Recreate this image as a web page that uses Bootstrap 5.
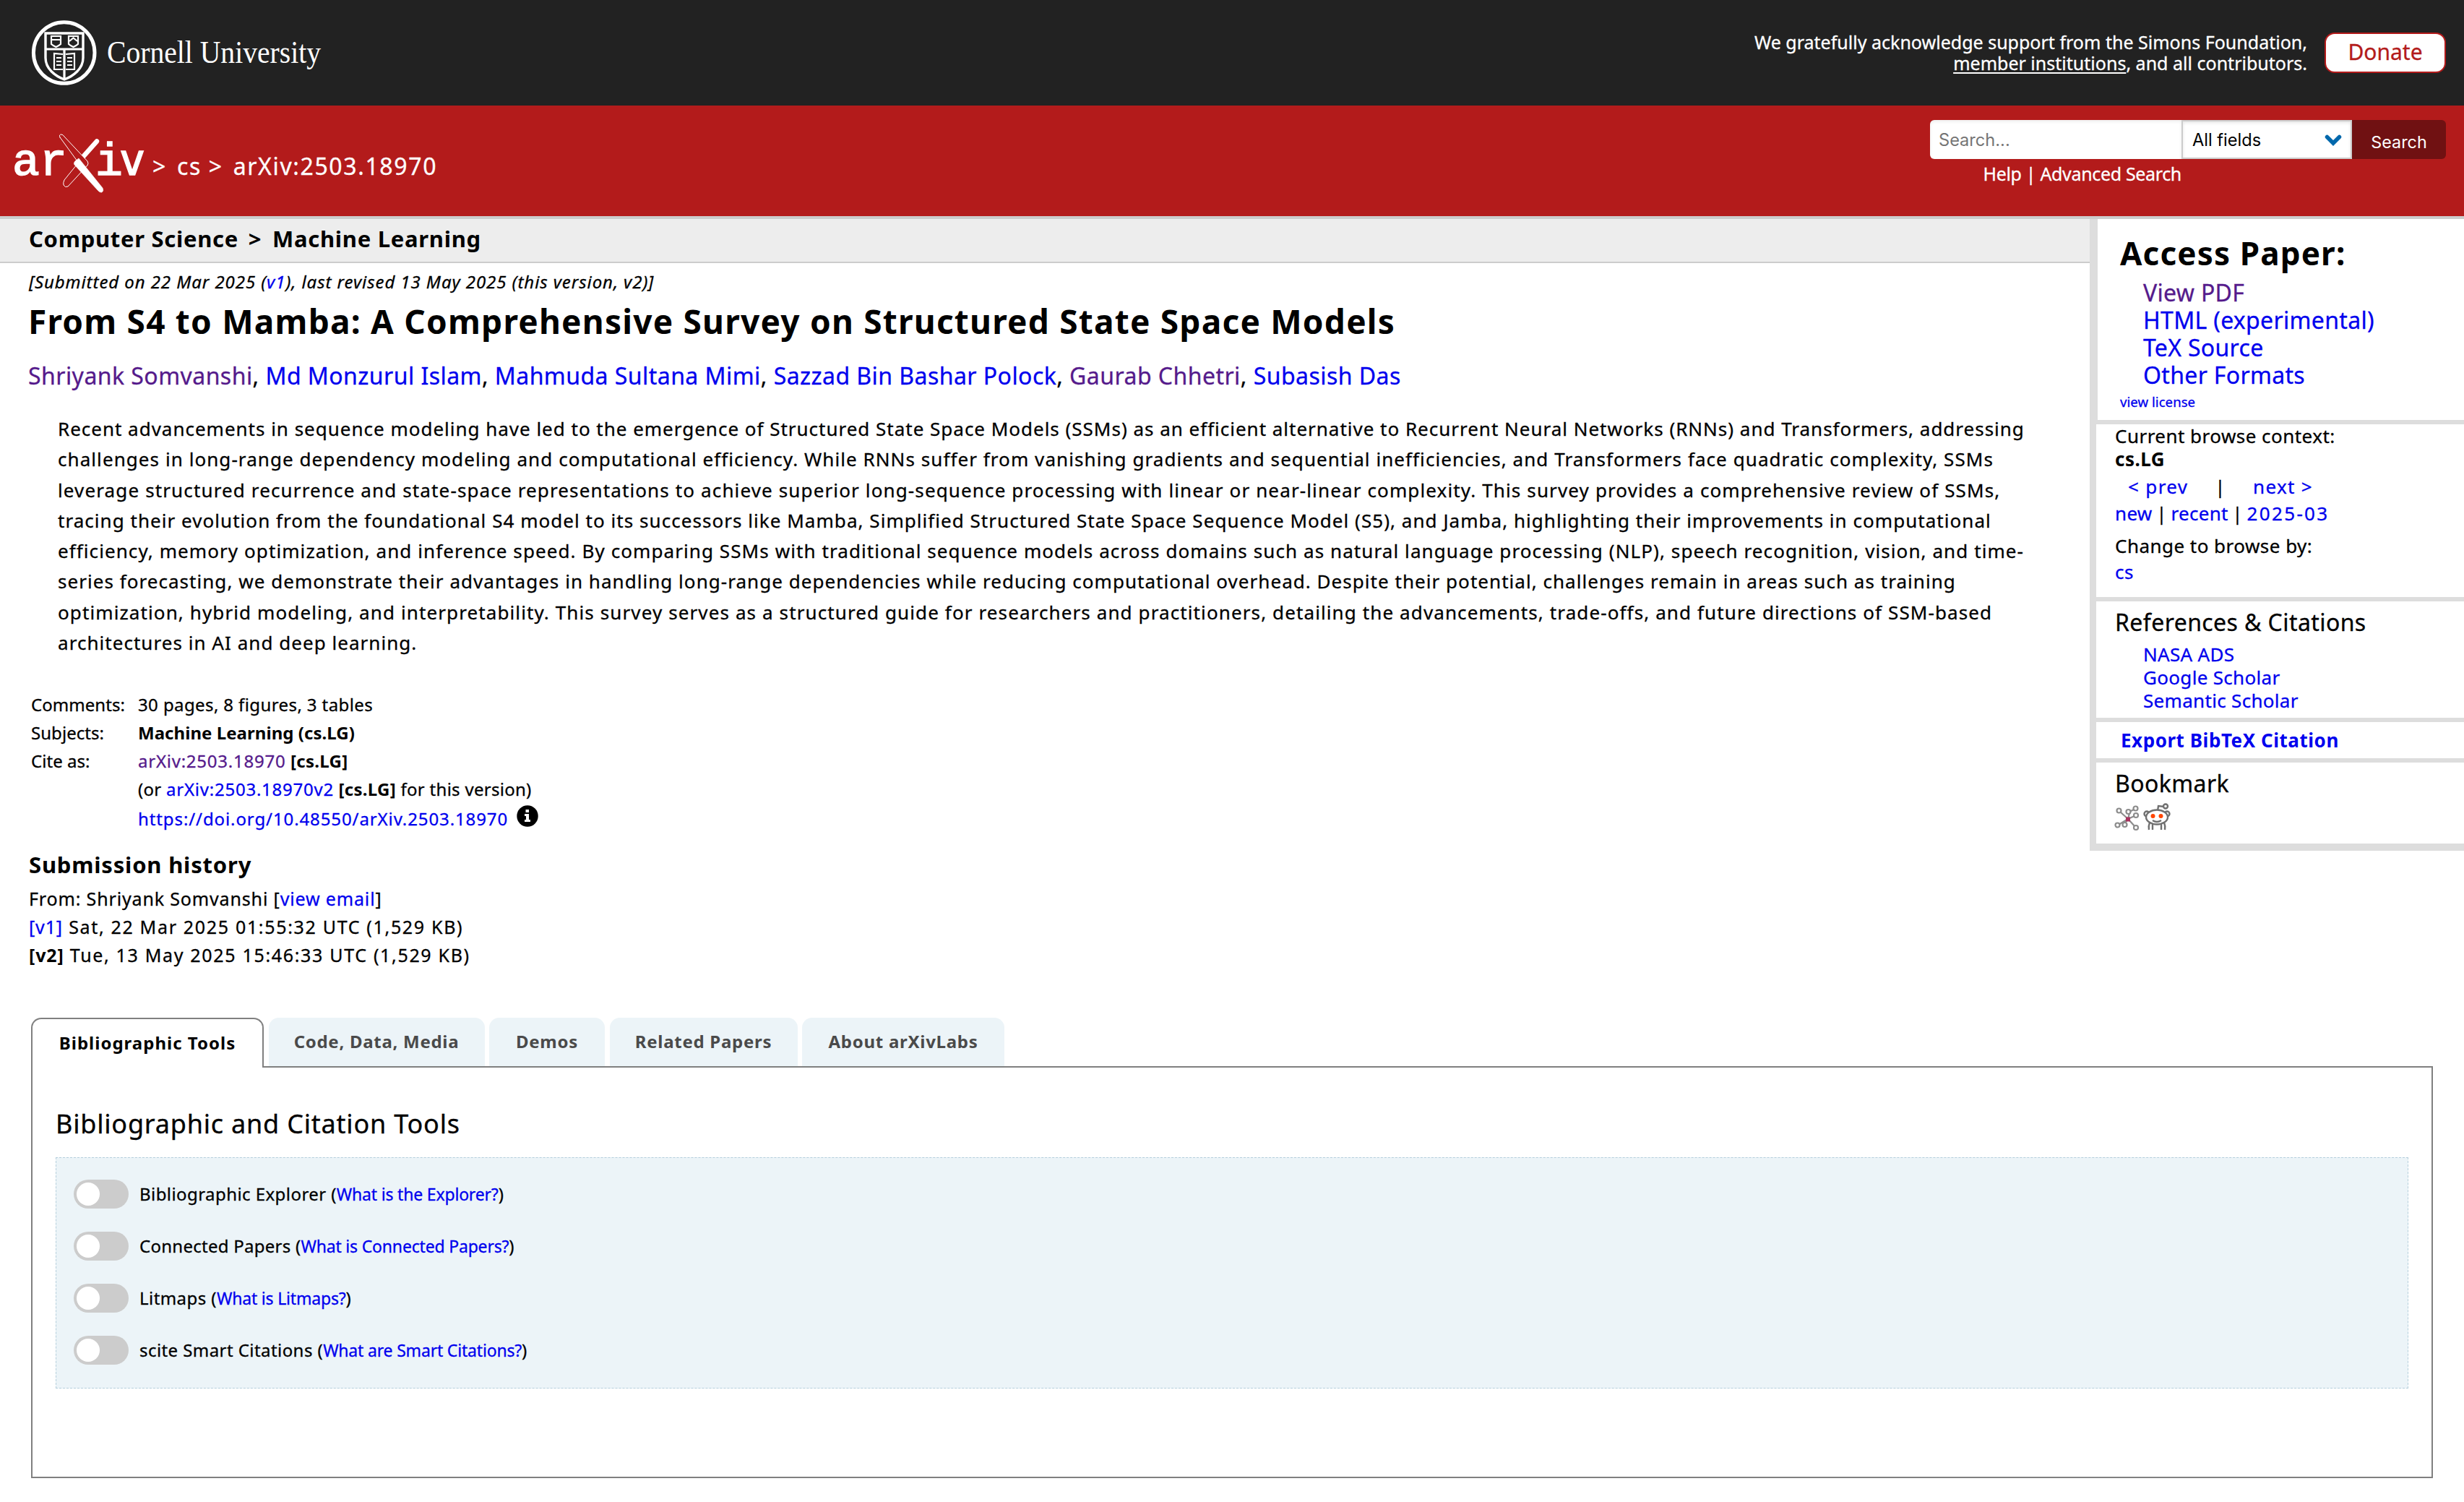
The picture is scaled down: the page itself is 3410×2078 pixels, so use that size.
<!DOCTYPE html>
<html lang="en">
<head>
<meta charset="utf-8">
<title>From S4 to Mamba: A Comprehensive Survey on Structured State Space Models</title>
<link href="https://cdn.jsdelivr.net/npm/bootstrap@5.3.0/dist/css/bootstrap.min.css" rel="stylesheet">
<style>
body{font-family:"Noto Sans","Open Sans",sans-serif;font-weight:400;font-size:26px;color:#000;background:#fff;line-height:32px;width:3410px;height:2078px;overflow:hidden;-webkit-text-stroke:.3px currentColor}
a{color:#00e;text-decoration:none;-webkit-text-stroke-color:currentColor}
a.seen{color:#551a8b}
b,.heavy,h1,h2,.tabx{font-weight:700;-webkit-text-stroke-width:0}
svg{overflow:visible;-webkit-text-stroke-width:0}
.topbar{background:#222;height:146px;padding:0 25px 0 43px}
.ack{font-size:25px;line-height:29.5px;color:#fff;letter-spacing:.0005em}
.ack a{color:#fff;text-decoration:underline;text-decoration-thickness:2px;text-underline-offset:3px}
.donate{width:168px;height:56px;border:2px solid #b31b1b;border-radius:14px;background:#fff;color:#b31b1b;font-size:30px;line-height:49px;padding:0;font-weight:400}
.redbar{background:#b31b1b;height:157px;border-bottom:4px solid #ccc;color:#fff;padding:0 25px 0 18px}
.redbar a{color:#fff}
.trail{font-size:32px;line-height:40px;letter-spacing:.051em;padding-top:64px;margin-left:9px}
.trail span{margin-right:4px}
.finder{padding-top:20px}
.finder .form-control{flex:0 0 348px;height:54px;border:0;border-radius:6px 0 0 6px;font:400 23.6px/54px Inter,"Liberation Sans",sans-serif;padding:1px 12px 0;box-shadow:inset 0 2px 4px rgba(0,0,0,.08);color:#000;-webkit-text-stroke-width:0}
.finder .form-control::placeholder{color:#757575;opacity:1}
.fieldsel{width:236px;height:54px;border:2px solid #ccc;background:#fff;color:#000;font:400 23.6px/50px Inter,"Liberation Sans",sans-serif;padding:1px 12px 0 13px;box-shadow:inset 0 2px 4px rgba(0,0,0,.1);-webkit-text-stroke-width:0}
.gobtn{width:130px;height:54px;background:#701112;color:#fff;border:0;border-radius:0 6px 6px 0;font:400 23.3px/56px Inter,"Liberation Sans",sans-serif;padding:3px 0 0;-webkit-text-stroke-width:0}
.helpline{font-size:25px;line-height:41px;letter-spacing:-.0135em;width:348px}
.crumbs{height:61px;background:#ededed;border-bottom:2px solid #ccc;padding-left:40px;font-size:31px;line-height:54px;letter-spacing:.023em;margin:0}
.crumbs span{margin:0 6px 0 5px}
.dateline{font-size:24px;line-height:52px;font-style:italic;letter-spacing:.0385em;padding-left:40px}
.papertitle{font-size:46px;line-height:56px;letter-spacing:.0266em;padding-left:39px;margin:0}
.authors{font-size:32px;line-height:95px;letter-spacing:.0141em;padding-left:39px}
.abstract{font-size:26px;line-height:42.27px;margin:5px 0 0 80px;white-space:nowrap}
.abstract span{display:block}
.w1{letter-spacing:.038em}.w2{letter-spacing:.0411em}.w3{letter-spacing:.0436em}.w4{letter-spacing:.0401em}
.w5{letter-spacing:.0418em}.w6{letter-spacing:.04em}.w7{letter-spacing:.0427em}.w8{letter-spacing:.04em}
.metatable{margin:45px 0 0 43px;font-size:24px;line-height:39px;letter-spacing:.002em}
.metatable td{padding:0}
.metatable td:first-child{width:148px}
.pagestext{letter-spacing:.0165em}
.idtext{letter-spacing:.012em}
.idtext a{letter-spacing:.032em}
.doi{line-height:43px;letter-spacing:.0375em}
.doi svg{margin:3px 0 0 12px}
.history h2{font-size:31px;line-height:50px;letter-spacing:.026em;margin:17px 0 3px}
.history{padding-left:40px;font-size:25px;line-height:39px}
.fromline{letter-spacing:.034em}
.stamp{letter-spacing:.067em}
.stamp a,.stamp b{letter-spacing:.035em}
.side{width:518px;flex:none;line-height:32px}
.side section{border-left:9px solid #ddd;border-bottom:6px solid #ddd;padding-left:26px}
.side .access{height:284px;border-left-width:11px;padding-left:31px;padding-top:17px}
.access h2{font-size:44px;line-height:60px;letter-spacing:.026em;margin:0 0 6px}
.access ul{list-style:none;margin:0;padding:0 0 0 32px;font-size:32px;line-height:38px;letter-spacing:.01em}
.license{font-size:18.6px;line-height:35px;letter-spacing:.002em}
.browse{height:245px;letter-spacing:.018em}
.side h3{font-size:32px;line-height:57px;font-weight:400;margin:0;letter-spacing:.013em}
.refs{height:167px}
.refs ul{list-style:none;margin:0;padding:0 0 0 39px;letter-spacing:.012em}
.export{height:56px;line-height:50px}
.export a{font-weight:700;letter-spacing:.021em;margin-left:8px;-webkit-text-stroke-width:0}
.side .marks{height:122px;border-bottom-width:10px}
.marks svg+svg{margin-left:8px}
.prevnext{line-height:44px;margin-left:18px;letter-spacing:.052em}
.prevnext span{margin:0 37px}
.periods{line-height:30px;letter-spacing:.012em;word-spacing:-1.5px}
.periods a+a+a{letter-spacing:.09em}
.changeby{line-height:30px;margin-top:15px}
.csline{line-height:43px}
.labs{margin:67px 0 0 43px;width:3324px}
.labs .nav{gap:6.5px;height:67px;flex-wrap:nowrap}
.tabx{flex:none;background:#ecf4f8;border-radius:14px 14px 0 0;height:67px;line-height:65px;font-size:24px;color:#4a4a4a;text-align:center;letter-spacing:.03em;padding:0}
.tabx.active{background:#fff;border:2px solid #808080;border-bottom:0;height:69px;color:#000;letter-spacing:.042em;z-index:1}
.t1{width:322px}.t2{width:299px}.t3{width:160px}.t4{width:260px}.t5{width:280px}
.panel{border:2px solid #808080;height:570px;padding:48px 32px 0}
.panel h2{font-size:36px;line-height:60px;font-weight:400;letter-spacing:.022em;margin:0 0 16px;-webkit-text-stroke-width:.3px}
.toolbox{height:320px;background:#ecf4f8;border:1px dashed #b5cfdc;padding:30px 24px;gap:32px;font-size:24px;line-height:40px;letter-spacing:.018em}
.toolbox .snug{letter-spacing:.011em}
.toolbox a{font-size:23px;letter-spacing:-.008em}
.switchx{width:76px;height:40px;border-radius:20px;background:#ccc;padding:4px;margin-right:15px}
.switchx i{display:block;width:32px;height:32px;border-radius:50%;background:#fff}
</style>
<script src="https://cdn.jsdelivr.net/npm/bootstrap@5.3.0/dist/js/bootstrap.bundle.min.js"></script>
</head>
<body>
<header>
  <div class="topbar d-flex align-items-center justify-content-between">
    <svg width="410" height="146" viewBox="43 0 410 146" aria-label="Cornell University">
      <g fill="none" stroke="#fff">
        <circle cx="88.7" cy="73" r="42.3" stroke-width="5"/>
        <path d="M63 46H115V80C115 95 102 105 89 110C76 105 63 95 63 80Z" stroke-width="3.4"/>
        <path d="M63 68H115M89 68V109" stroke-width="3.2"/>
        <path d="M71 50H84V61Q82 63 77.500 65Q73 63 71 61ZM71 55H84M95 50H108V61Q106 63 101.500 65Q97 63 95 61ZM96 57L101.500 52.500L107 57" stroke-width="2.200"/>
        <path d="M87 75L75 74V96L87 96M91 75L103 74V96L91 96M78 80H85M78 85H85M78 90H85M93 80H100M93 85H100M93 90H100" stroke-width="2.200"/>
      </g>
      <text x="148" y="87" textLength="296" lengthAdjust="spacingAndGlyphs" font-family="Liberation Serif, serif" font-weight="400" font-size="44" fill="#fff">Cornell University</text>
    </svg>
    <div class="d-flex align-items-center">
      <div class="ack text-end">We gratefully acknowledge support from the Simons Foundation,<br><a href="#">member institutions</a>, and all contributors.</div>
      <a class="btn donate ms-4" href="#">Donate</a>
    </div>
  </div>
  <div class="redbar d-flex justify-content-between">
    <div class="d-flex">
      <svg width="184" height="150" viewBox="18 146 184 150" aria-label="arXiv">
        <g fill="#fff" stroke="#fff" stroke-width="1.600" font-family="Liberation Mono, monospace" font-weight="400" font-size="63">
          <text x="17" y="242">a</text><text x="55" y="242">r</text><text x="132" y="242">i</text>
          <text x="165" y="242" font-family="DejaVu Sans Mono, monospace" font-size="60">v</text>
        </g>
        <g fill="none" stroke="#fff" stroke-linecap="round">
          <path d="M115 217L89 249Q87 253 88 256Q90 260 94 258L118 232" stroke-width="1"/>
          <path d="M134 195.500L114 218" stroke-width="6.400"/>
          <path d="M83 190Q81 186 85 186Q87 186 89 189L121 223Q123 226 121 229L115 234L83 190Z" fill="#b31b1b" stroke-width="1"/>
          <path d="M105 222L109 219L142 260Q144 264 141 266Q138 267 135 263L103 228Q101 225 105 222Z" fill="#fff" stroke-width=".5"/>
        </g>
      </svg>
      <div class="trail"><span>&gt;</span> <a href="#">cs</a> <span>&gt;</span> arXiv:2503.18970</div>
    </div>
    <div class="finder">
      <div class="d-flex">
        <input class="form-control" type="text" placeholder="Search...">
        <div class="fieldsel d-flex align-items-center justify-content-between">All fields
          <svg width="24" height="16" viewBox="0 0 24 16"><path d="M3.500 3.500L12 12L20.500 3.500" fill="none" stroke="#0068ac" stroke-width="5.500" stroke-linecap="round"/></svg>
        </div>
        <button class="gobtn">Search</button>
      </div>
      <div class="helpline text-end"><a href="#">Help</a> | <a href="#">Advanced Search</a></div>
    </div>
  </div>
</header>

<main>
  <div class="d-flex align-items-start">
    <article class="flex-grow-1">
      <h1 class="crumbs">Computer Science <span>&gt;</span> Machine Learning</h1>
      <div class="dateline">[Submitted on 22 Mar 2025 (<a href="#">v1</a>), last revised 13 May 2025 (this version, v2)]</div>
      <h1 class="papertitle">From S4 to Mamba: A Comprehensive Survey on Structured State Space Models</h1>
      <div class="authors"><a class="seen" href="#">Shriyank Somvanshi</a>, <a href="#">Md Monzurul Islam</a>, <a href="#">Mahmuda Sultana Mimi</a>, <a href="#">Sazzad Bin Bashar Polock</a>, <a class="seen" href="#">Gaurab Chhetri</a>, <a href="#">Subasish Das</a></div>
      <div class="abstract">
        <span class="w1">Recent advancements in sequence modeling have led to the emergence of Structured State Space Models (SSMs) as an efficient alternative to Recurrent Neural Networks (RNNs) and Transformers, addressing</span>
        <span class="w2">challenges in long-range dependency modeling and computational efficiency. While RNNs suffer from vanishing gradients and sequential inefficiencies, and Transformers face quadratic complexity, SSMs</span>
        <span class="w3">leverage structured recurrence and state-space representations to achieve superior long-sequence processing with linear or near-linear complexity. This survey provides a comprehensive review of SSMs,</span>
        <span class="w4">tracing their evolution from the foundational S4 model to its successors like Mamba, Simplified Structured State Space Sequence Model (S5), and Jamba, highlighting their improvements in computational</span>
        <span class="w5">efficiency, memory optimization, and inference speed. By comparing SSMs with traditional sequence models across domains such as natural language processing (NLP), speech recognition, vision, and time-</span>
        <span class="w6">series forecasting, we demonstrate their advantages in handling long-range dependencies while reducing computational overhead. Despite their potential, challenges remain in areas such as training</span>
        <span class="w7">optimization, hybrid modeling, and interpretability. This survey serves as a structured guide for researchers and practitioners, detailing the advancements, trade-offs, and future directions of SSM-based</span>
        <span class="w8">architectures in AI and deep learning.</span>
      </div>
      <table class="metatable">
        <tr><td>Comments:</td><td class="pagestext">30 pages, 8 figures, 3 tables</td></tr>
        <tr><td>Subjects:</td><td><b>Machine Learning (cs.LG)</b></td></tr>
        <tr><td>Cite as:</td><td class="idtext"><a class="seen" href="#">arXiv:2503.18970</a> <b>[cs.LG]</b></td></tr>
        <tr><td></td><td class="idtext">(or <a href="#">arXiv:2503.18970v2</a> <b>[cs.LG]</b> for this version)</td></tr>
        <tr><td></td><td class="doi"><span class="d-flex"><a href="#">https://doi.org/10.48550/arXiv.2503.18970</a>
          <svg width="30" height="30" viewBox="0 0 30 30"><circle cx="15" cy="15" r="14.700" fill="#000"/><path d="M12.500 6H17V10H12.500ZM11 12H17V20H19V23H11V20H13V15H11Z" fill="#fff"/></svg></span></td></tr>
      </table>
      <div class="history">
        <h2>Submission history</h2>
        <div class="fromline">From: Shriyank Somvanshi [<a href="#">view email</a>]</div>
        <div class="stamp"><a href="#">[v1]</a> Sat, 22 Mar 2025 01:55:32 UTC (1,529 KB)</div>
        <div class="stamp"><b>[v2]</b> Tue, 13 May 2025 15:46:33 UTC (1,529 KB)</div>
      </div>
    </article>
    <aside class="side">
      <section class="access">
        <h2>Access Paper:</h2>
        <ul><li><a class="seen" href="#">View PDF</a></li><li><a href="#">HTML (experimental)</a></li><li><a href="#">TeX Source</a></li><li><a href="#">Other Formats</a></li></ul>
        <div class="license"><a href="#">view license</a></div>
      </section>
      <section class="browse">
        <div>Current browse context:</div>
        <div class="heavy">cs.LG</div>
        <div class="prevnext d-flex"><a href="#">&lt; prev</a><span>|</span><a href="#">next &gt;</a></div>
        <div class="periods"><a href="#">new</a> | <a href="#">recent</a> | <a href="#">2025-03</a></div>
        <div class="changeby">Change to browse by:</div>
        <div class="csline"><a href="#">cs</a></div>
      </section>
      <section class="refs">
        <h3>References &amp; Citations</h3>
        <ul><li><a href="#">NASA ADS</a></li><li><a href="#">Google Scholar</a></li><li><a href="#">Semantic Scholar</a></li></ul>
      </section>
      <section class="export"><a href="#">Export BibTeX Citation</a></section>
      <section class="marks">
        <h3>Bookmark</h3>
        <div class="d-flex align-items-start">
          <svg width="32" height="36" viewBox="0 -4 32 36"><g fill="none" stroke="#8c8c8c" stroke-width="2.200"><path d="M18 17L7 7M18 17L29 29M18 17L14 23M18 17L5 25M18 17L20 9M18 17L29 12M20 7L28 3"/><g fill="#fff"><circle cx="5.500" cy="5.500" r="3"/><circle cx="18.500" cy="7" r="3"/><circle cx="28.500" cy="2.500" r="3"/><circle cx="29" cy="12" r="3"/><circle cx="3.500" cy="25.500" r="3"/><circle cx="13.500" cy="25" r="3"/><circle cx="29" cy="29" r="3"/></g></g><rect x="15" y="14.500" width="6" height="6" fill="#a8325e"/></svg>
          <svg width="36" height="36" viewBox="0 0 36 36"><g fill="#fff" stroke="#707070" stroke-width="2.400"><path d="M19 10L20 3L28 4" fill="none"/><circle cx="30" cy="3.500" r="3"/><circle cx="4" cy="14" r="3.500"/><circle cx="32" cy="14" r="3.500"/><path d="M8 26Q6 31 7 36M12 27V36M24 27V36M28 26Q30 31 29 36" fill="none"/><ellipse cx="18" cy="18.500" rx="15" ry="10"/><path d="M12 23Q18 27 24 23" fill="none"/></g><circle cx="12.500" cy="17" r="3" fill="#ff4500"/><circle cx="23.500" cy="17" r="3" fill="#ff4500"/></svg>
        </div>
      </section>
    </aside>
  </div>

  <div class="labs">
    <div class="nav">
      <a class="nav-link tabx active position-relative t1" href="#">Bibliographic Tools</a>
      <a class="nav-link tabx t2" href="#">Code, Data, Media</a>
      <a class="nav-link tabx t3" href="#">Demos</a>
      <a class="nav-link tabx t4" href="#">Related Papers</a>
      <a class="nav-link tabx t5" href="#">About arXivLabs</a>
    </div>
    <div class="panel">
      <h2>Bibliographic and Citation Tools</h2>
      <div class="toolbox d-flex flex-column">
        <div class="d-flex"><span class="switchx"><i></i></span><span>Bibliographic Explorer (<a href="#">What is the Explorer?</a>)</span></div>
        <div class="d-flex snug"><span class="switchx"><i></i></span><span>Connected Papers (<a href="#">What is Connected Papers?</a>)</span></div>
        <div class="d-flex"><span class="switchx"><i></i></span><span>Litmaps (<a href="#">What is Litmaps?</a>)</span></div>
        <div class="d-flex"><span class="switchx"><i></i></span><span>scite Smart Citations (<a href="#">What are Smart Citations?</a>)</span></div>
      </div>
    </div>
  </div>
</main>
</body>
</html>
